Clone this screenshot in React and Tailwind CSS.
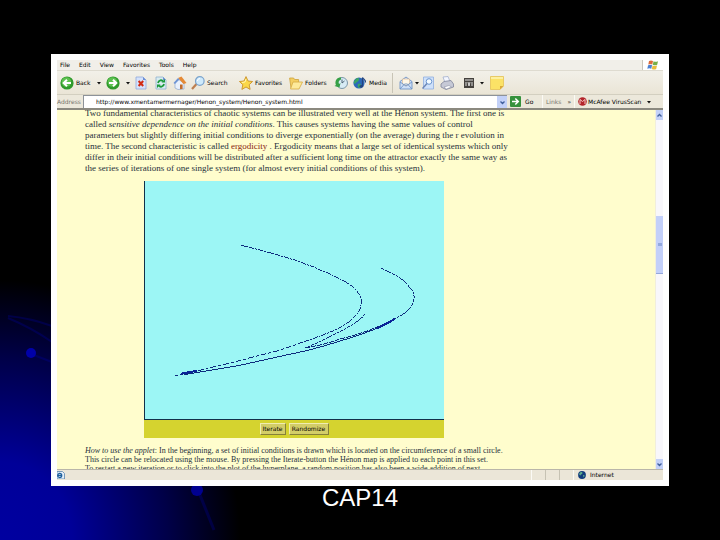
const Caret = () => (
  <svg className="w-1 h-1 shrink-0" viewBox="0 0 4 4">
    <path d="M0 1h4L2 3.4z" fill="#111" />
  </svg>
);

const ArrowIcon = ({ flip = false }) => (
  <svg className="w-3.5 h-3.5 shrink-0" viewBox="0 0 14 14">
    <circle cx="7" cy="7" r="6.6" fill="#2f9a2c" />
    <circle cx="6.4" cy="6" r="4.8" fill="#5cc04f" />
    <path
      d={flip ? 'M3 7h7M7 3.8 10.3 7 7 10.2' : 'M11 7H4M7 3.8 3.7 7 7 10.2'}
      stroke="#fff"
      strokeWidth="2"
      fill="none"
    />
  </svg>
);

const StopIcon = () => (
  <svg className="w-3.5 h-3.5 shrink-0" viewBox="0 0 14 14">
    <path d="M2 1h7l3 3v9H2z" fill="#d5e2fb" stroke="#8fa9dc" strokeWidth=".8" />
    <path d="M9 1v3h3z" fill="#6d8fd6" />
    <path d="m4.6 5 4.6 5M9.2 5 4.6 10" stroke="#d22b12" strokeWidth="2" />
  </svg>
);

const RefreshIcon = () => (
  <svg className="w-3.5 h-3.5 shrink-0" viewBox="0 0 14 14">
    <path d="M2 1h7l3 3v9H2z" fill="#d9ecf0" stroke="#8fb3cf" strokeWidth=".8" />
    <path d="M9 1v3h3z" fill="#6d8fd6" />
    <path d="M4 7c.5-3 4-3.500 5-1.500M10 8c-.5 3-4 3.500-5 1.500" stroke="#1c9a3a" strokeWidth="1.800" fill="none" />
    <path d="M7.500 6.500h3.500V3zM6.500 8.500H3V12z" fill="#1c9a3a" />
  </svg>
);

const HomeIcon = () => (
  <svg className="w-3.5 h-3.5 shrink-0" viewBox="0 0 14 14">
    <path d="M2 6.500 5 3l6 4v6l-6 .500-3-1.500z" fill="#e8f0fc" stroke="#8ca6cf" strokeWidth=".7" />
    <path d="M5 2 8.500.600 13.500 7l-3 1z" fill="#e58a35" />
    <path d="M.500 7 5 2l1.500 1.500L2 8z" fill="#6f95d4" />
    <path d="M7 8.500h2.600V13L7 13.300z" fill="#c06b2a" />
  </svg>
);

const SearchIcon = () => (
  <svg className="w-3.5 h-3.5 shrink-0" viewBox="0 0 14 14">
    <path d="M5.500 8 1 13" stroke="#bd7f50" strokeWidth="2.200" />
    <circle cx="8.800" cy="5" r="4.300" fill="#cfeafb" stroke="#7ba4cd" strokeWidth="1.200" />
    <path d="M6.500 5c0-1.500 1-2.400 2.500-2.400" stroke="#fff" fill="none" />
  </svg>
);

const StarIcon = () => (
  <svg className="w-3.5 h-3.5 shrink-0" viewBox="0 0 14 14">
    <path
      d="m7 .600 2 4.400 4.600.500-3.400 3.200.9 4.700L7 11l-4.100 2.400.9-4.700L.400 5.500 5 5z"
      fill="#fbd748"
      stroke="#c9922b"
      strokeWidth=".9"
    />
    <path d="M7 3 6 6l-3 .500" stroke="#fff6b0" fill="none" />
  </svg>
);

const FolderIcon = () => (
  <svg className="w-3.5 h-3.5 shrink-0" viewBox="0 0 14 14">
    <path d="M.600 2h4l1 1.500h4V12H2z" fill="#f4cf63" stroke="#cda23a" strokeWidth=".8" />
    <path d="M4 6h9.500L10 13H1.500z" fill="#fdea9b" stroke="#d5ab43" strokeWidth=".8" />
  </svg>
);

const HistoryIcon = () => (
  <svg className="w-3.5 h-3.5 shrink-0" viewBox="0 0 14 14">
    <circle cx="8" cy="7" r="5.500" fill="#d7ebf5" stroke="#7c98a8" />
    <path d="M8 7V3.500M8 7l2.500-2" stroke="#40586a" strokeWidth=".9" />
    <path d="M7 1.500C2 1 .500 6 2 9L.500 10l5 1.500L6.500 7 5 8C4 6 5 4 7 3.500z" fill="#35a046" />
  </svg>
);

const MediaIcon = () => (
  <svg className="w-3.5 h-3.5 shrink-0" viewBox="0 0 14 14">
    <circle cx="6" cy="7" r="5.600" fill="#2c68b8" />
    <path d="M2 4c2-3 5-2 4 0S3 6 2 8C0 7 1 5 2 4zM5 8c3-1 4 1 2 4-2 0-3-2-2-4z" fill="#3aa565" />
    <path d="M9.500 10V1.500c1 2 3.500 2 3 5" stroke="#24447f" strokeWidth="1.200" fill="none" />
    <ellipse cx="8.300" cy="10.300" rx="1.800" ry="1.400" fill="#24447f" />
  </svg>
);

const MailIcon = () => (
  <svg className="w-3.5 h-3.5 shrink-0" viewBox="0 0 14 14">
    <path d="M1 5.500 7 1l6 4.500V13H1z" fill="#cfe0f7" stroke="#6f94c6" strokeWidth=".9" />
    <path d="M3.500 3h7v5L7 10 3.500 8z" fill="#fff7e6" stroke="#d8b48a" strokeWidth=".6" />
    <path d="m1 13 4.500-5h3L13 13M1 6l6 4 6-4" stroke="#6f94c6" strokeWidth=".9" fill="none" />
  </svg>
);

const PreviewIcon = () => (
  <svg className="w-3.5 h-3.5 shrink-0" viewBox="0 0 14 14">
    <path d="M2.500 1h10v12h-10z" fill="#cfe1fa" stroke="#90afe0" strokeWidth=".8" />
    <circle cx="8" cy="5.500" r="2.800" fill="#f3faff" stroke="#6c96cf" />
    <path d="m6 7.500-4.500 5" stroke="#6c86b6" strokeWidth="1.400" />
  </svg>
);

const PrintIcon = () => (
  <svg className="w-3.5 h-3.5 shrink-0" viewBox="0 0 14 14">
    <path d="m3 1 5-.500 2 5-5 1z" fill="#f4f7ff" stroke="#9aa8c8" strokeWidth=".7" />
    <path d="m1 8 3-2.500 7-1 2.500 3.500v3L6 13.500 1 11z" fill="#c6c9d6" stroke="#80859a" strokeWidth=".8" />
    <path d="m4 11 5-1.500 2.500 1.500L6.500 13z" fill="#fff" stroke="#8d92a6" strokeWidth=".6" />
  </svg>
);

const EditIcon = () => (
  <svg className="w-2.5 h-2.5 shrink-0" viewBox="0 0 10 10">
    <path d="M0 0h10v10H0z" fill="#45423e" />
    <path d="M1 2h8M2 4v4M4 4l1 4 1-4M8 4v4" stroke="#eee" strokeWidth=".9" fill="none" />
  </svg>
);

const NoteIcon = () => (
  <svg className="w-3.5 h-3.5 shrink-0" viewBox="0 0 14 14">
    <path d="M.500.500h13V10L10 13.500H.500z" fill="#fbe266" stroke="#e3bd4a" strokeWidth=".7" />
    <path d="M13.500 10H10v3.500z" fill="#d9a93a" />
    <path d="M1 1h12v2H1z" fill="#fdf0a0" />
  </svg>
);

const WindowsLogo = () => (
  <svg className="w-3 h-2.5" viewBox="0 0 12 10">
    <path d="M2 1q2-1 4 0L5.300 4.500q-2-1-4 0z" fill="#dd6a3a" />
    <path d="M6.600 1.300q2 1 4.400 0L10.200 4.800q-2 1-4.400 0z" fill="#76ae48" />
    <path d="M1.100 5.200q2-1 4 0L4.300 8.700q-2-1-4 0z" fill="#4c7fd0" />
    <path d="M5.600 5.500q2 1 4.400 0L9.200 9q-2 1-4.400 0z" fill="#e9bd3e" />
  </svg>
);

const GoIcon = () => (
  <svg className="w-[11px] h-[11px]" viewBox="0 0 11 11">
    <rect width="11" height="11" rx="1" fill="#35913c" />
    <path d="M2 5.500h6M5.300 2.500l3 3-3 3" stroke="#fff" strokeWidth="1.500" fill="none" />
  </svg>
);

const ShieldIcon = () => (
  <svg className="w-[9px] h-[9px] shrink-0" viewBox="0 0 9 9">
    <circle cx="4.500" cy="4.500" r="4.300" fill="#b3242b" />
    <path d="M2 7V2.500l2.500 2 2.500-2V7" stroke="#f3c9c6" strokeWidth="1" fill="none" />
  </svg>
);

const GlobeIcon = () => (
  <svg className="w-2 h-2 shrink-0" viewBox="0 0 8 8">
    <circle cx="4" cy="4" r="3.900" fill="#123c7c" />
    <path d="M1.500 2c1-1.500 3-1.500 3 0s-2 1-2 2.500C1 4 1 3 1.500 2zM5 4c2-.500 2 1 .500 2.500z" fill="#5fae8c" />
  </svg>
);

const PageIcon = () => (
  <svg className="w-2 h-2 shrink-0" viewBox="0 0 8 8">
    <path d="M0 .500h5.500L7.500 2.500V8H0z" fill="#e2edf8" stroke="#5b87ad" strokeWidth=".8" />
    <circle cx="2.700" cy="4.500" r="2" fill="none" stroke="#1e609c" strokeWidth="1.300" />
    <path d="M1 4.500h3.500" stroke="#1e609c" />
  </svg>
);

const Chevron = ({ up = false }) => (
  <svg className="w-[5px] h-[5px]" viewBox="0 0 5 5">
    <path d={up ? 'M.500 3.500l2-2 2 2' : 'M.500 1.500l2 2 2-2'} stroke="#3f5f9c" strokeWidth="1.300" fill="none" />
  </svg>
);

const tools = [
  { name: 'Back', label: 'Back', icon: <ArrowIcon />, width: 'w-[46px]', caret: true },
  { name: 'Forward', icon: <ArrowIcon flip />, width: 'w-7', caret: true },
  { name: 'Stop', icon: <StopIcon />, width: 'w-5' },
  { name: 'Refresh', icon: <RefreshIcon />, width: 'w-[19px]' },
  { name: 'Home', icon: <HomeIcon />, width: 'w-[18px]' },
  { name: 'Search', label: 'Search', icon: <SearchIcon />, width: 'w-12' },
  { name: 'Favorites', label: 'Favorites', icon: <StarIcon />, width: 'w-[50px]' },
  { name: 'Folders', label: 'Folders', icon: <FolderIcon />, width: 'w-[45px]' },
  { name: 'History', icon: <HistoryIcon />, width: 'w-[19px]' },
  { name: 'Media', label: 'Media', icon: <MediaIcon />, width: 'w-[39px]' },
];

const pageTools = [
  { name: 'Mail', icon: <MailIcon />, width: 'w-[22px]', caret: true },
  { name: 'Preview', icon: <PreviewIcon />, width: 'w-[19px]' },
  { name: 'Print', icon: <PrintIcon />, width: 'w-6' },
  { name: 'Edit', icon: <EditIcon />, width: 'w-[26px]', caret: true },
  { name: 'Note', icon: <NoteIcon />, width: 'w-4' },
];

const ToolButton = ({ name, label, icon, width, caret }) => (
  <button type="button" aria-label={name} className={`flex items-center gap-0.5 shrink-0 ${width}`}>
    {icon}
    {label && <span>{label}</span>}
    {caret && <span className={name === 'Mail' ? '' : 'pl-1'}><Caret /></span>}
  </button>
);

const Attractor = () => (
  <svg
    className="block w-full h-[239px] bg-[#9cf6f5] border-l border-b border-[#12304a]"
    viewBox="0 0 300 238"
    fill="none"
    stroke="#0c2a7c"
    strokeWidth="1"
    shapeRendering="crispEdges"
  >
    <path
      strokeDasharray="5 1 2 1"
      d="M96 64C116 69 136 74 156 81C174 88 190 94 203 102C213 108 217 115 217 121C217 128 214 133 209 137C204 142 199 145 193 148C182 153 171 157 159 161"
    />
    <path strokeDasharray="6 2 3 2" d="M159 161C151 164 142 167 133 170C117 174 102 178 86 182L49 191L30 195" />
    <path strokeDasharray="3 1" d="M237 87C243 90 248 92 253 95C259 99 263 102 265 106C269 110 270 113 270 116C270 120 269 123 267 126C263 131 258 134 251 138" />
    <path d="M251 138C244 142 237 146 229 149C218 153 207 157 196 160C184 164 173 167 161 170L129 177L93 185L39 194" />
    <path strokeDasharray="3 1" d="M221 133C218 137 214 140 209 143C203 147 196 151 189 154C180 159 170 163 161 167" />
    <path strokeDasharray="5 1" d="M161 167C173 165 185 162 196 158C206 156 215 153 223 150C234 146 243 142 251 137" />
    <path strokeWidth="2" d="M232 148L251 138M36 193L52 190" stroke="#0a2398" />
  </svg>
);

const Backdrop = () => (
  <svg className="absolute left-0 bottom-0 w-60 h-[260px]" viewBox="0 0 240 260" fill="none" stroke="#0000a8">
    <g strokeWidth="2" opacity=".28">
      <path d="M8 36Q30 38 52 46" />
      <path d="M8 38Q32 48 52 62" />
      <path d="M31 74 52 82" />
      <path d="M198 210 214 250" strokeWidth="3" />
    </g>
    <circle cx="31" cy="73" r="5" fill="#0000a8" stroke="none" />
    <circle cx="197" cy="210" r="6" fill="#000090" stroke="none" />
  </svg>
);

const ScrollBar = () => (
  <div className="flex flex-col w-2 shrink-0 bg-[#f8f7fb] border-l border-[#f1eedc]">
    <button type="button" aria-label="Scroll up" className="flex items-center justify-center h-2.5 bg-[#c3d1f8]">
      <Chevron up />
    </button>
    <div className="grow-[96]" />
    <div className="flex flex-col items-center justify-center h-[58px] bg-[#c3d0fa] border-b border-[#93a7db]">
      <span className="w-1 h-[3px] bg-[#93a9df]" />
    </div>
    <div className="grow-[185]" />
    <button type="button" aria-label="Scroll down" className="flex items-center justify-center h-2.5 bg-[#c3d1f8]">
      <Chevron />
    </button>
  </div>
);

const Browser = () => (
  <section className="flex flex-col flex-1 min-h-0 bg-white p-1.5 text-[6px] leading-[10px] text-black font-['DejaVu_Sans',sans-serif]">
    <nav className="flex items-center h-[11px] shrink-0 bg-[#f1efe9] border-b border-[#dedbd0] pl-[3px]">
      <ul className="flex flex-1 gap-[9px]">
        {['File', 'Edit', 'View', 'Favorites', 'Tools', 'Help'].map((item) => (
          <li key={item}>
            <button type="button" className="block">{item}</button>
          </li>
        ))}
      </ul>
      <div className="flex items-center justify-center w-[21px] h-2.5 bg-white border-l border-[#c9c6bc]">
        <WindowsLogo />
      </div>
    </nav>

    <div className="flex items-center h-6 shrink-0 bg-linear-to-b from-[#f2f0e9] to-[#eae5d6] border-b border-[#d3cfc0] pl-[3px]">
      {tools.map((tool) => (
        <ToolButton key={tool.name} {...tool} />
      ))}
      <span className="w-px h-5 mr-1.5 bg-[#c8c4b6]" />
      {pageTools.map((tool) => (
        <ToolButton key={tool.name} {...tool} />
      ))}
    </div>

    <div className="flex items-center h-[15px] shrink-0 bg-[#ece8db] border-b-2 border-[#8b897f]">
      <label htmlFor="address" className="w-[26px] shrink-0 text-[#77756e]">Address</label>
      <div className="flex flex-1 h-[13px] bg-white border-l border-t border-[#8d9299]">
        <input
          id="address"
          className="flex-1 min-w-0 pl-3 outline-none"
          defaultValue="http://www.xmentamermernager/Henon_system/Henon_system.html"
        />
        <button type="button" aria-label="Show addresses" className="flex items-center justify-center w-2.5 bg-[#c3d1f8]">
          <Chevron />
        </button>
      </div>
      <button type="button" className="flex items-center gap-1 w-[35px] pl-[3px]">
        <GoIcon />
        Go
      </button>
      <div className="flex items-center gap-1.5 h-[13px] w-8 pl-[3px] border-l border-[#fbfaf5] text-[#77756e]">
        Links
        <span className="text-black">»</span>
      </div>
      <div className="flex items-center h-[13px] w-[89px] gap-px pl-[3px] border-l border-[#fbfaf5]">
        <ShieldIcon />
        <span className="flex-1 whitespace-nowrap">McAfee VirusScan</span>
        <span className="pr-3"><Caret /></span>
      </div>
    </div>

    <div className="flex flex-1 min-h-0">
      <article className="flex-1 min-w-0 overflow-hidden bg-[#fffdcd] pl-7 whitespace-nowrap text-[#26303c] font-['Liberation_Serif',serif]">
        <p className="-mt-0.5 text-[9px] leading-[11px]">
          Two fundamental characteristics of chaotic systems can be illustrated very well at the Hénon system. The first one is<br />
          called <i>sensitive dependence on the initial conditions</i>. This causes systems having the same values of control<br />
          parameters but slightly differing initial conditions to diverge exponentially (on the average) during the r evolution in<br />
          time. The second characteristic is called <a href="#ergodicity" className="text-[#8a1c10]">ergodicity</a> . Ergodicity means that a large set of identical systems which only<br />
          differ in their initial conditions will be distributed after a sufficient long time on the attractor exactly the same way as<br />
          the series of iterations of one single system (for almost every initial conditions of this system).
        </p>
        <div className="w-[300px] mt-[7px] ml-[59px]">
          <Attractor />
          <div className="flex items-center justify-center gap-[3px] h-[18px] bg-[#d5d32f] text-[6px] leading-[10px] text-black font-['DejaVu_Sans',sans-serif]">
            <button type="button" className="w-[26px] bg-[#d3cd68] border border-t-[#f0edb0] border-l-[#f0edb0] border-b-[#85803a] border-r-[#85803a]">
              Iterate
            </button>
            <button type="button" className="w-10 bg-[#d3cd68] border border-t-[#f0edb0] border-l-[#f0edb0] border-b-[#85803a] border-r-[#85803a]">
              Randomize
            </button>
          </div>
        </div>
        <p className="mt-2 text-[8px] leading-[9px]">
          <i>How to use the applet</i>: In the beginning, a set of initial conditions is drawn which is located on the circumference of a small circle.<br />
          This circle can be relocated using the mouse. By pressing the Iterate-button the Hénon map is applied to each point in this set.<br />
          To restart a new iteration or to click into the plot of the hyperplane, a random position has also been a wide addition of next
        </p>
      </article>
      <ScrollBar />
    </div>

    <footer className="flex items-center h-[11px] shrink-0 bg-[#ebe6d8] border-t border-[#b9b6a9]">
      <span className="flex-1"><PageIcon /></span>
      <span className="w-3.5 h-2.5 border-l border-[#fbfaf5]" />
      <span className="w-3.5 h-2.5 border-l border-[#c6c2b3]" />
      <span className="w-3.5 h-2.5 border-l border-[#c6c2b3]" />
      <span className="flex items-center gap-1 w-[90px] h-2.5 pl-1 border-l border-[#fbfaf5]">
        <GlobeIcon />
        Internet
      </span>
    </footer>
  </section>
);

export default function App() {
  return (
    <main className="relative flex flex-col h-screen overflow-hidden bg-black bg-[radial-gradient(ellipse_240px_260px_at_0_540px,#0000a0_0%,#000098_30%,#000048_70%,#000000_100%)]">
      <Backdrop />
      <div className="relative flex flex-col flex-1 min-h-0 px-[51px] pt-[54px]">
        <Browser />
        <h1 className="h-[54px] shrink-0 text-center text-2xl leading-6 text-white font-['Liberation_Sans',sans-serif]">
          CAP14
        </h1>
      </div>
    </main>
  );
}
